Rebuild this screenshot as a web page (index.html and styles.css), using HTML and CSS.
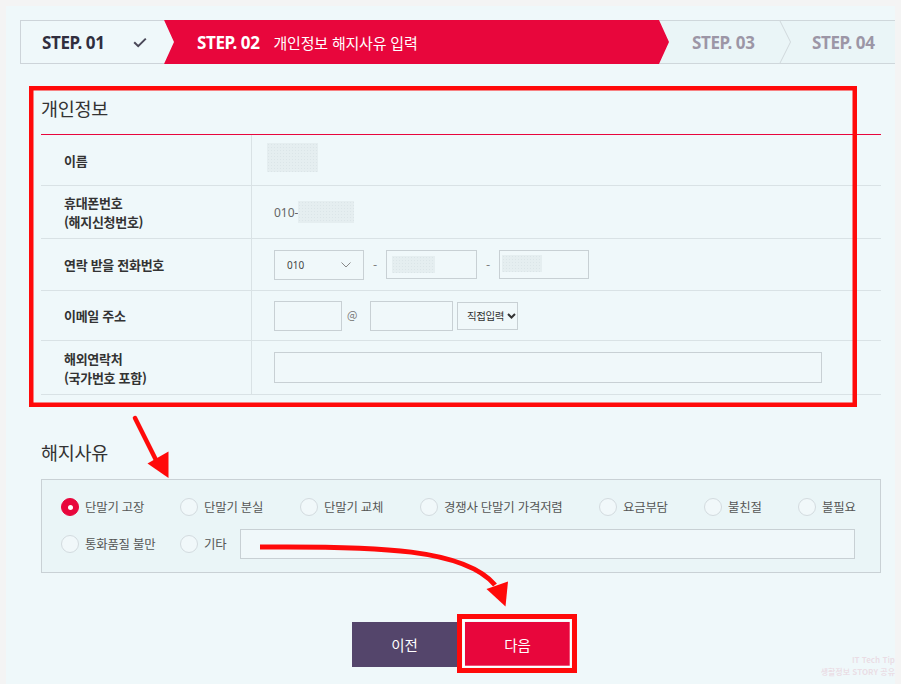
FILE: index.html
```html
<!DOCTYPE html>
<html lang="ko">
<head>
<meta charset="utf-8">
<title>해지 신청</title>
<link rel="stylesheet" href="styles.css">
</head>
<body>
<div class="page">
  <div class="steps">
    <div class="step step-done">
      <span class="step-no">STEP. 01</span>
      <svg class="check" width="14" height="11" viewBox="0 0 14 11"><polyline points="1.2,5.2 5.2,9.2 12.8,1.6" fill="none" stroke="#4a4858" stroke-width="2"/></svg>
    </div>
    <div class="step step-current">
      <span class="step-no">STEP. 02</span>
      <span class="step-title">개인정보 해지사유 입력</span>
    </div>
    <div class="step step-todo step-3"><span class="step-no">STEP. 03</span></div>
    <div class="step step-todo step-4">
      <svg class="sep" width="13" height="44" viewBox="0 0 13 44"><polyline points="0.5,0 11.5,22 0.5,44" fill="none" stroke="#d0d8dc" stroke-width="1"/></svg>
      <span class="step-no">STEP. 04</span>
    </div>
  </div>

  <section class="info">
    <h2 class="sec-title">개인정보</h2>
    <div class="form-table">
      <div class="row r1">
        <div class="th">이름</div>
        <div class="td"><span class="mask mask-name"></span></div>
      </div>
      <div class="row r2">
        <div class="th">휴대폰번호<br>(해지신청번호)</div>
        <div class="td"><span class="num">010-</span><span class="mask mask-phone"></span></div>
      </div>
      <div class="row r3">
        <div class="th">연락 받을 전화번호</div>
        <div class="td">
          <div class="sel sel-tel"><span>010</span><svg width="10" height="6" viewBox="0 0 10 6"><polyline points="0.5,0.5 5,5 9.5,0.5" fill="none" stroke="#888" stroke-width="1"/></svg></div>
          <span class="dash">-</span>
          <div class="inp inp-tel2"><span class="mask mask-t2"></span></div>
          <span class="dash">-</span>
          <div class="inp inp-tel3"><span class="mask mask-t3"></span></div>
        </div>
      </div>
      <div class="row r4">
        <div class="th">이메일 주소</div>
        <div class="td">
          <div class="inp inp-mail1"></div>
          <span class="at">@</span>
          <div class="inp inp-mail2"></div>
          <div class="sel sel-mail"><span>직접입력</span><svg width="9" height="6" viewBox="0 0 9 6"><polyline points="1,1 4.5,4.5 8,1" fill="none" stroke="#333" stroke-width="2"/></svg></div>
        </div>
      </div>
      <div class="row r5">
        <div class="th">해외연락처<br>(국가번호 포함)</div>
        <div class="td"><div class="inp inp-abroad"></div></div>
      </div>
    </div>
  </section>

  <section class="reason">
    <h2 class="sec-title sec-title-reason">해지사유</h2>
    <div class="reason-box">
      <div class="radio-row row-a">
        <label class="radio on"><i></i>단말기 고장</label>
        <label class="radio"><i></i>단말기 분실</label>
        <label class="radio"><i></i>단말기 교체</label>
        <label class="radio"><i></i>경쟁사 단말기 가격저렴</label>
        <label class="radio"><i></i>요금부담</label>
        <label class="radio"><i></i>불친절</label>
        <label class="radio"><i></i>불필요</label>
      </div>
      <div class="radio-row row-b">
        <label class="radio"><i></i>통화품질 불만</label>
        <label class="radio"><i></i>기타</label>
        <div class="inp inp-etc"></div>
      </div>
    </div>
  </section>

  <div class="buttons">
    <button class="btn btn-prev">이전</button>
    <button class="btn btn-next">다음</button>
  </div>
</div>

<svg class="annot" width="901" height="684" viewBox="0 0 901 684">
  <rect x="31.25" y="88.25" width="823.5" height="316.5" fill="none" stroke="#ff0a0a" stroke-width="4.5"/>
  <path d="M135,418 L160,468" stroke="#ff0a0a" stroke-width="4.5" stroke-linecap="round" fill="none"/>
  <polygon points="147.5,463.5 168.5,451.5 168.5,478" fill="#ff0a0a"/>
  <path d="M260,547 C 380,546 465,549 495,585" stroke="#ff0a0a" stroke-width="5" fill="none"/>
  <polygon points="486.5,589 508,581.5 505.5,606.5" fill="#ff0a0a"/>
  <rect x="459.5" y="616.5" width="115" height="54" fill="none" stroke="#ff0a0a" stroke-width="5"/>
  <rect x="463.5" y="620.5" width="107" height="46" fill="none" stroke="#ffffff" stroke-width="1.6"/>
</svg>
<div class="watermark"><span>IT Tech Tip</span><span>생활정보 STORY 공유</span></div>
</body>
</html>
```

FILE: styles.css
```css
html, body {
  margin: 0;
  padding: 0;
}
body {
  background: #f4f4f4;
  font-family: "Noto Sans CJK KR", "Noto Sans", sans-serif;
  width: 901px;
  height: 684px;
  overflow: hidden;
  position: relative;
}
.page {
  margin: 6px 0 0 6px;
  width: 889px;
  height: 678px;
  background: #eff8fa;
  padding-top: 14px;
  box-sizing: border-box;
}

/* steps */
.steps {
  display: flex;
  height: 44px;
  margin-left: 14px;
}
.step {
  height: 44px;
  box-sizing: border-box;
  display: flex;
  align-items: center;
  font-family: "Noto Sans", sans-serif;
}
.step-no {
  font-weight: 700;
  font-size: 17px;
  letter-spacing: -0.4px;
}
.step-done {
  width: 144px;
  border: 1px solid #cdd4d9;
  border-right: 0;
  padding-left: 21px;
  color: #302e3e;
}
.check {
  margin-left: 28px;
  margin-top: 1px;
}
.step-current {
  width: 505px;
  background: #e8063c;
  color: #fff;
  padding-left: 33px;
  clip-path: polygon(0 0, calc(100% - 10px) 0, 100% 50%, calc(100% - 10px) 100%, 0 100%, 10px 50%);
  position: relative;
  z-index: 2;
}
.step-title {
  font-family: "Noto Sans CJK KR", sans-serif;
  font-size: 15px;
  margin-left: 14px;
  letter-spacing: -0.2px;
}
.step-todo {
  background: #eaf5f7;
  border-top: 1px solid #cfd7db;
  border-bottom: 1px solid #cfd7db;
  color: #9c96a6;
  padding-left: 33px;
}
.step-3 {
  width: 120px;
  margin-left: -10px;
}
.step-4 {
  flex: 1;
  position: relative;
}
.sep {
  position: absolute;
  left: 0;
  top: -1px;
}

/* sections */
.info, .reason {
  padding: 0 14px 0 35px;
}
.sec-title {
  margin: 0;
  padding-top: 32px;
  padding-bottom: 14px;
  line-height: 24px;
  font-size: 18.5px;
  font-weight: 400;
  color: #333;
  letter-spacing: -0.3px;
}
.sec-title-reason {
  padding-top: 45px;
  padding-bottom: 15px;
}

.form-table {
  border-top: 1px solid #e8063c;
}
.row {
  display: flex;
  border-bottom: 1px solid #d9e2e5;
}
.r1 { height: 50px; }
.r2 { height: 52px; }
.r3 { height: 51px; }
.r4 { height: 49px; }
.r5 { height: 53px; }
.th {
  width: 211px;
  flex: none;
  box-sizing: border-box;
  border-right: 1px solid #d9e2e5;
  padding-left: 23px;
  display: flex;
  align-items: center;
  font-weight: 700;
  font-size: 13px;
  line-height: 19px;
  color: #333;
  letter-spacing: -0.3px;
}
.td {
  flex: 1;
  padding-left: 22px;
  display: flex;
  align-items: center;
  font-size: 12px;
  color: #555;
}
.mask {
  display: block;
  background-color: #e5eef0;
  background-image: radial-gradient(#dbe5e8 0.6px, transparent 0.8px);
  background-size: 3px 3px;
}
.mask-name {
  width: 51px;
  height: 29px;
  margin-left: -7px;
  margin-top: -6px;
}
.num {
  font-family: "Noto Sans", sans-serif;
  font-size: 12px;
  color: #666;
}
.mask-phone {
  width: 56px;
  height: 22px;
  margin-left: 0;
}
.inp, .sel {
  box-sizing: border-box;
  border: 1px solid #c8d0d4;
  background: #f0f8fa;
  height: 30px;
  display: flex;
  align-items: center;
}
.sel-tel {
  width: 90px;
  padding: 0 12px 0 12px;
  justify-content: space-between;
  font-family: "Noto Sans", sans-serif;
  font-size: 10px;
  color: #444;
}
.dash {
  width: 22px;
  text-align: center;
  color: #777;
  font-size: 12px;
}
.inp-tel2 { width: 91px; height: 29px; padding-left: 5px; }
.inp-tel3 { width: 90px; height: 29px; padding-left: 2px; }
.mask-t2 { width: 43px; height: 17px; }
.mask-t3 { width: 40px; height: 17px; margin-top: -2px; }
.inp-mail1 { width: 68px; }
.at {
  width: 28px;
  box-sizing: border-box;
  padding-left: 5px;
  font-size: 11px;
  color: #777;
  margin-top: -4px;
}
.inp-mail2 { width: 83px; }
.sel-mail {
  width: 61px;
  height: 28px;
  margin-left: 4px;
  padding: 0 1px 0 9px;
  justify-content: space-between;
  font-size: 10.5px;
  color: #333;
  letter-spacing: -0.4px;
}
.inp-abroad { width: 548px; height: 31px; }

/* reasons */
.reason-box {
  border: 1px solid #c9d1d5;
  background: #eaf5f7;
  padding: 18px 0 13px 19px;
}
.radio-row {
  display: grid;
  align-items: center;
}
.row-a {
  height: 18px;
  grid-template-columns: 119px 120px 120px 179px 105px 94px auto;
}
.row-b {
  margin-top: 13px;
  height: 30px;
  grid-template-columns: 119px 60px 615px;
}
.radio {
  display: flex;
  align-items: center;
  gap: 6px;
  font-size: 12.4px;
  color: #555;
  white-space: nowrap;
  letter-spacing: -0.2px;
}
.radio i {
  width: 18px;
  height: 18px;
  flex: none;
  box-sizing: border-box;
  border-radius: 50%;
  border: 1px solid #d3dbdf;
  background: #f1f8fa;
  position: relative;
}
.radio.on i {
  background: #e8063c;
  border-color: #e8063c;
}
.radio.on i::after {
  content: "";
  position: absolute;
  left: 5.5px;
  top: 5.5px;
  width: 5px;
  height: 5px;
  border-radius: 50%;
  background: #fff;
}
.inp-etc {
  height: 30px;
  background: #f0f8fa;
}

/* buttons */
.buttons {
  display: flex;
  justify-content: center;
  gap: 8px;
  margin-top: 49px;
  padding-left: 21px;
}
.btn {
  width: 105px;
  height: 45px;
  border: 0;
  color: #fff;
  font-family: "Noto Sans CJK KR", sans-serif;
  font-size: 14.5px;
  padding: 0;
}
.btn-prev { background: #54456b; }
.btn-next { background: #e8063c; }

/* annotation overlay */
.annot {
  position: absolute;
  left: 0;
  top: 0;
  pointer-events: none;
}
.watermark {
  position: absolute;
  right: 6px;
  bottom: 6px;
  display: flex;
  flex-direction: column;
  align-items: flex-end;
  font-size: 8px;
  line-height: 12px;
  font-weight: 700;
  color: rgba(226, 170, 188, 0.35);
}
```
